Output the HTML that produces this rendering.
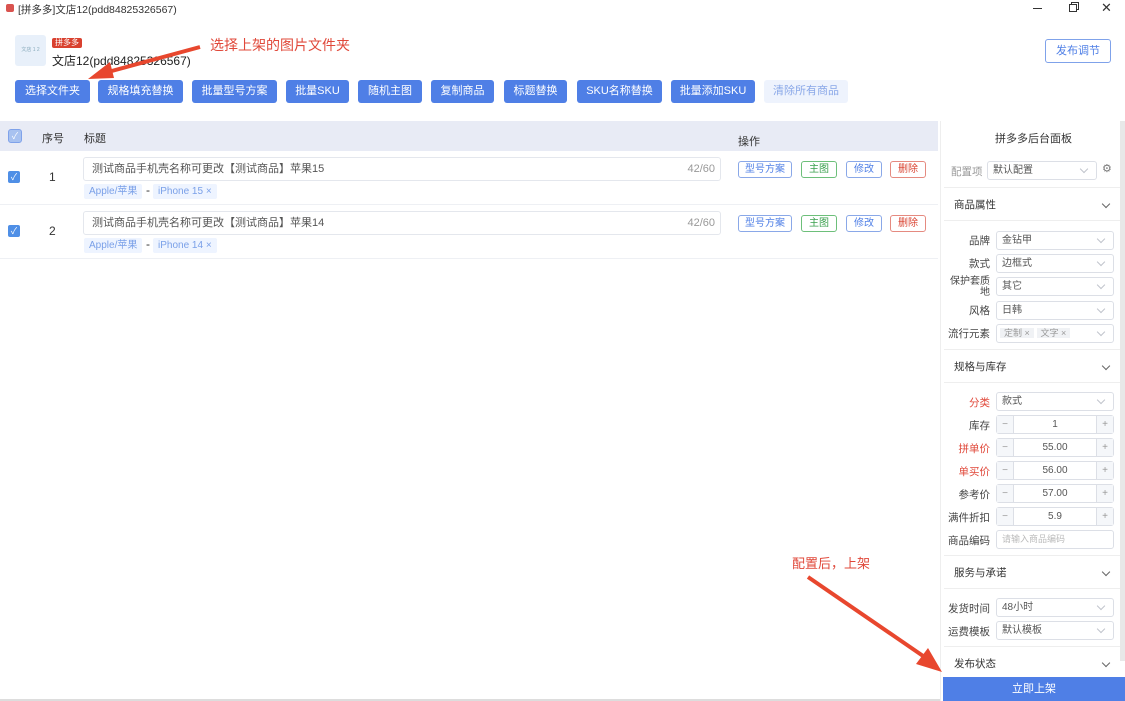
<!DOCTYPE html>
<html><head><meta charset="utf-8"><style>
*{box-sizing:border-box;margin:0;padding:0}
body{width:1125px;height:701px;overflow:hidden;background:#fff;font-family:"Liberation Sans","Noto Sans CJK SC",sans-serif;font-size:12px;color:#333;position:relative}
.a{position:absolute}
.btn{position:absolute;top:80px;height:23px;background:#4f7fe6;color:#fff;border-radius:3px;font-size:11px;line-height:23px;text-align:center}
.ob{position:absolute;height:17px;border:1px solid;border-radius:3px;font-size:10px;line-height:15px;text-align:center;background:#fff}
.tag{position:absolute;height:15px;background:#eef4ff;color:#7aa0e8;font-size:10px;line-height:15px;padding:0 5px;border-radius:2px}
.cb{position:absolute;width:12px;height:12px;background:#4f8fe6;border-radius:2px;color:#fff;font-size:9px;line-height:12px;text-align:center}
.lbl{position:absolute;right:135px;font-size:10.5px;text-align:right;color:#444}
.sel{position:absolute;left:996px;width:118px;height:19px;border:1px solid #dcdfe6;border-radius:3px;font-size:10px;line-height:17px;padding-left:5px;color:#555}
.sel:after{content:"";position:absolute;right:9px;top:4px;width:5px;height:5px;border-right:1px solid #c0c4cc;border-bottom:1px solid #c0c4cc;transform:rotate(45deg)}
.num{position:absolute;left:996px;width:118px;height:19px;border:1px solid #dcdfe6;border-radius:3px;font-size:10px;line-height:17px;text-align:center;color:#555}
.num .m,.num .p{position:absolute;top:0;width:17px;height:17px;background:#f5f7fa;color:#999}
.num .m{left:0;border-right:1px solid #dcdfe6}.num .p{right:0;border-left:1px solid #dcdfe6}
.sec{position:absolute;left:944px;width:176px;height:34px;font-size:10.5px;line-height:34px;padding-left:10px;border-top:1px solid #eee;border-bottom:1px solid #eee;color:#333}
.sec:after{content:"";position:absolute;right:11px;top:13px;width:5px;height:5px;border-right:1px solid #666;border-bottom:1px solid #666;transform:rotate(45deg)}
.red{color:#e0483a}
</style></head><body>
<div class="a" style="left:6px;top:4px;width:8px;height:8px;background:#d9534f;border-radius:2px"></div>
<div class="a" style="left:18px;top:2px;font-size:10.5px">[拼多多]文店12(pdd84825326567)</div>
<div class="a" style="left:1033px;top:8px;width:9px;height:1px;background:#333"></div>
<div class="a" style="left:1069px;top:4px;width:8px;height:8px;border:1px solid #333;box-shadow:2px -2px 0 -1px #fff,2px -2px 0 0 #333"></div>
<div class="a" style="left:1101px;top:0;font-size:13px">✕</div>
<div class="a" style="left:15px;top:35px;width:31px;height:31px;background:#e8f0fa;border-radius:3px;font-size:5px;color:#8ab;line-height:31px;text-align:center">文店 1 2</div>
<div class="a" style="left:52px;top:38px;background:#d9412f;color:#fff;font-size:8px;padding:0 3px;border-radius:2px;line-height:10px">拼多多</div>
<div class="a" style="left:52px;top:52px;font-size:12px;color:#222">文店12(pdd84825326567)</div>
<div class="a red" style="left:210px;top:35px;font-size:14px">选择上架的图片文件夹</div>
<div class="a" style="left:1045px;top:39px;width:66px;height:24px;border:1px solid #7fa2ea;border-radius:3px;color:#4f7fe6;font-size:11px;line-height:22px;text-align:center">发布调节</div>
<div class="btn" style="left:15px;width:75px">选择文件夹</div>
<div class="btn" style="left:98px;width:85px">规格填充替换</div>
<div class="btn" style="left:192px;width:85px">批量型号方案</div>
<div class="btn" style="left:286px;width:63px">批量SKU</div>
<div class="btn" style="left:358px;width:64px">随机主图</div>
<div class="btn" style="left:431px;width:63px">复制商品</div>
<div class="btn" style="left:504px;width:63px">标题替换</div>
<div class="btn" style="left:577px;width:85px">SKU名称替换</div>
<div class="btn" style="left:671px;width:84px">批量添加SKU</div>
<div class="btn" style="left:764px;width:84px;background:#eef3fd;color:#8aa8e8">清除所有商品</div>
<div class="a" style="left:0;top:121px;width:938px;height:30px;background:#e8ebf5"></div>
<div class="a" style="left:8px;top:129px;width:14px;height:14px;border:1px solid #7fa2ea;border-radius:3px;background:#a8c2f0;color:#fff;font-size:9px;line-height:12px;text-align:center">✓</div>
<div class="a" style="left:42px;top:130px;font-size:11px">序号</div>
<div class="a" style="left:84px;top:130px;font-size:11px">标题</div>
<div class="a" style="left:738px;top:133px;font-size:11px">操作</div>
<div class="a" style="left:0;top:204px;width:938px;height:1px;background:#eef0f4"></div>
<div class="a" style="left:0;top:258px;width:938px;height:1px;background:#eef0f4"></div>
<div class="cb" style="left:8px;top:171px">✓</div><div class="a" style="left:49px;top:170px;font-size:12px">1</div>
<div class="cb" style="left:8px;top:225px">✓</div><div class="a" style="left:49px;top:224px;font-size:12px">2</div>
<div class="a" style="left:83px;top:157px;width:638px;height:24px;border:1px solid #e4e7ed;border-radius:3px;font-size:11px;line-height:22px;padding-left:8px;color:#555">测试商品手机壳名称可更改【测试商品】苹果15<span style="position:absolute;right:5px;color:#999">42/60</span></div>
<div class="a" style="left:83px;top:211px;width:638px;height:24px;border:1px solid #e4e7ed;border-radius:3px;font-size:11px;line-height:22px;padding-left:8px;color:#555">测试商品手机壳名称可更改【测试商品】苹果14<span style="position:absolute;right:5px;color:#999">42/60</span></div>
<div class="tag" style="left:84px;top:184px">Apple/苹果</div><div class="a" style="left:146px;top:183px">-</div><div class="tag" style="left:153px;top:184px">iPhone 15 ×</div>
<div class="tag" style="left:84px;top:238px">Apple/苹果</div><div class="a" style="left:146px;top:237px">-</div><div class="tag" style="left:153px;top:238px">iPhone 14 ×</div>
<div class="ob" style="left:738px;top:161px;width:54px;border-color:#8aa8e8;color:#4f7fe6">型号方案</div>
<div class="ob" style="left:801px;top:161px;width:36px;border-color:#6dbf7a;color:#3aa04d">主图</div>
<div class="ob" style="left:846px;top:161px;width:36px;border-color:#8aa8e8;color:#4f7fe6">修改</div>
<div class="ob" style="left:890px;top:161px;width:36px;border-color:#e58a80;color:#d9412f">删除</div>
<div class="ob" style="left:738px;top:215px;width:54px;border-color:#8aa8e8;color:#4f7fe6">型号方案</div>
<div class="ob" style="left:801px;top:215px;width:36px;border-color:#6dbf7a;color:#3aa04d">主图</div>
<div class="ob" style="left:846px;top:215px;width:36px;border-color:#8aa8e8;color:#4f7fe6">修改</div>
<div class="ob" style="left:890px;top:215px;width:36px;border-color:#e58a80;color:#d9412f">删除</div>
<div class="a" style="left:0;top:699px;width:940px;height:2px;background:#ddd"></div>
<div class="a" style="left:940px;top:121px;width:185px;height:580px;background:#fff;border-left:1px solid #eee"></div>
<div class="a" style="left:1120px;top:121px;width:5px;height:540px;background:#e8e8e8"></div>
<div class="a" style="left:995px;top:130px;font-size:11px">拼多多后台面板</div>
<div class="a" style="left:951px;top:164px;font-size:10.5px;color:#999">配置项</div>
<div class="sel" style="left:987px;top:161px;width:110px">默认配置</div>
<div class="a" style="left:1102px;top:162px;font-size:11px;color:#777">⚙</div>
<div class="sec" style="top:187px">商品属性</div>
<div class="lbl" style="top:233px">品牌</div><div class="sel" style="top:231px">金钻甲</div>
<div class="lbl" style="top:256px">款式</div><div class="sel" style="top:254px">边框式</div>
<div class="lbl" style="top:276px;line-height:11px;font-size:10px">保护套质<br>地</div><div class="sel" style="top:277px">其它</div>
<div class="lbl" style="top:303px">风格</div><div class="sel" style="top:301px">日韩</div>
<div class="lbl" style="top:326px">流行元素</div><div class="sel" style="top:324px;padding-left:3px"><span style="background:#f0f2f5;color:#999;padding:0 4px;font-size:9px">定制 ×</span> <span style="background:#f0f2f5;color:#999;padding:0 4px;font-size:9px">文字 ×</span></div>
<div class="sec" style="top:349px">规格与库存</div>
<div class="lbl red" style="top:395px">分类</div><div class="sel" style="top:392px">款式</div>
<div class="lbl" style="top:418px">库存</div><div class="num" style="top:415px"><span class="m">−</span>1<span class="p">+</span></div>
<div class="lbl red" style="top:441px">拼单价</div><div class="num" style="top:438px"><span class="m">−</span>55.00<span class="p">+</span></div>
<div class="lbl red" style="top:464px">单买价</div><div class="num" style="top:461px"><span class="m">−</span>56.00<span class="p">+</span></div>
<div class="lbl" style="top:487px">参考价</div><div class="num" style="top:484px"><span class="m">−</span>57.00<span class="p">+</span></div>
<div class="lbl" style="top:510px">满件折扣</div><div class="num" style="top:507px"><span class="m">−</span>5.9<span class="p">+</span></div>
<div class="lbl" style="top:533px">商品编码</div><div class="a" style="left:996px;top:530px;width:118px;height:19px;border:1px solid #dcdfe6;border-radius:3px;color:#bbb;font-size:9px;line-height:17px;padding-left:5px">请输入商品编码</div>
<div class="sec" style="top:555px">服务与承诺</div>
<div class="lbl" style="top:601px">发货时间</div><div class="sel" style="top:598px">48小时</div>
<div class="lbl" style="top:624px">运费模板</div><div class="sel" style="top:621px">默认模板</div>
<div class="sec" style="top:646px;border-bottom:none">发布状态</div>
<div class="a" style="left:943px;top:677px;width:182px;height:24px;background:#4f7fe6;color:#fff;font-size:11px;line-height:24px;text-align:center">立即上架</div>
<div class="a red" style="left:792px;top:553px;font-size:13px">配置后，上架</div>
<svg class="a" style="left:0;top:0" width="1125" height="701">
<path d="M200 47 L108 72" stroke="#e8472e" stroke-width="4" fill="none"/>
<path d="M88 79 L110 62 L114 78 Z" fill="#e8472e"/>
<path d="M808 577 L926 658" stroke="#e8472e" stroke-width="4" fill="none"/>
<path d="M942 672 L916 664 L928 648 Z" fill="#e8472e"/>
</svg>
</body></html>
